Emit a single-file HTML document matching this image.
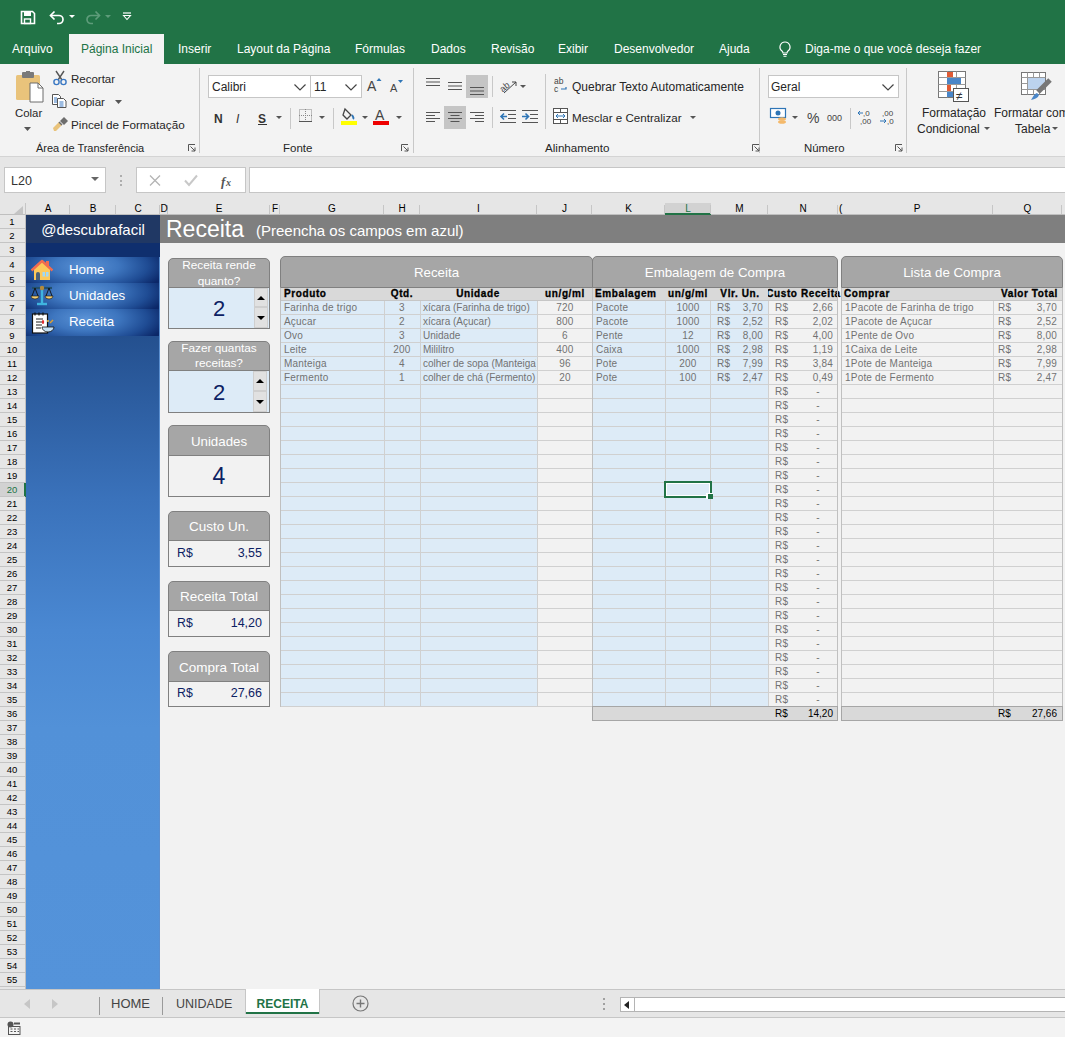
<!DOCTYPE html>
<html><head><meta charset="utf-8">
<style>
*{margin:0;padding:0;box-sizing:border-box}
html,body{width:1065px;height:1037px;overflow:hidden;background:#f3f3f3;font-family:"Liberation Sans",sans-serif;position:relative}
.a{position:absolute}
.t{position:absolute;white-space:nowrap}
svg{overflow:visible}
</style></head><body>
<div class="a" style="left:0px;top:0px;width:1065px;height:64px;background:#217346"></div>
<div class="a" style="left:69px;top:34px;width:95px;height:30px;background:#f3f3f3"></div>
<div class="t" style="left:12px;top:43px;font-size:12px;line-height:13.8px;color:#fff;font-weight:normal;">Arquivo</div>
<div class="t" style="left:81px;top:43px;font-size:12px;line-height:13.8px;color:#217346;font-weight:normal;">Página Inicial</div>
<div class="t" style="left:178px;top:43px;font-size:12px;line-height:13.8px;color:#fff;font-weight:normal;">Inserir</div>
<div class="t" style="left:237px;top:43px;font-size:12px;line-height:13.8px;color:#fff;font-weight:normal;">Layout da Página</div>
<div class="t" style="left:355px;top:43px;font-size:12px;line-height:13.8px;color:#fff;font-weight:normal;">Fórmulas</div>
<div class="t" style="left:431px;top:43px;font-size:12px;line-height:13.8px;color:#fff;font-weight:normal;">Dados</div>
<div class="t" style="left:491px;top:43px;font-size:12px;line-height:13.8px;color:#fff;font-weight:normal;">Revisão</div>
<div class="t" style="left:558px;top:43px;font-size:12px;line-height:13.8px;color:#fff;font-weight:normal;">Exibir</div>
<div class="t" style="left:614px;top:43px;font-size:12px;line-height:13.8px;color:#fff;font-weight:normal;">Desenvolvedor</div>
<div class="t" style="left:719px;top:43px;font-size:12px;line-height:13.8px;color:#fff;font-weight:normal;">Ajuda</div>
<div class="t" style="left:805px;top:43px;font-size:12px;line-height:13.8px;color:#fff;font-weight:normal;">Diga-me o que você deseja fazer</div>
<svg class="a" style="left:20px;top:10px;" width="16" height="15" viewBox="0 0 16 15"><path d="M1.5 1.5h11l2 2v10h-13z" fill="none" stroke="#fff" stroke-width="1.6"/><rect x="4" y="2" width="7" height="4" fill="#fff"/><rect x="4.5" y="9" width="6" height="4.5" fill="none" stroke="#fff" stroke-width="1.4"/></svg>
<svg class="a" style="left:49px;top:9px;" width="16" height="15" viewBox="0 0 16 15"><path d="M2 6.5h8a4 4 0 0 1 0 8h-2" fill="none" stroke="#fff" stroke-width="1.7"/><path d="M5.5 2.5l-4 4 4 4" fill="none" stroke="#fff" stroke-width="1.7"/></svg>
<svg class="a" style="left:69px;top:15px;" width="6" height="3" viewBox="0 0 6 3"><path d="M0 0h6l-3 3z" fill="#fff"/></svg>
<svg class="a" style="left:85px;top:9px;" width="16" height="15" viewBox="0 0 16 15"><path d="M14 6.5h-8a4 4 0 0 0 0 8h2" fill="none" stroke="#5e9c7a" stroke-width="1.7"/><path d="M10.5 2.5l4 4-4 4" fill="none" stroke="#5e9c7a" stroke-width="1.7"/></svg>
<svg class="a" style="left:105px;top:15px;" width="6" height="3" viewBox="0 0 6 3"><path d="M0 0h6l-3 3z" fill="#5e9c7a"/></svg>
<svg class="a" style="left:122px;top:12px;" width="10" height="8" viewBox="0 0 10 8"><path d="M1 1h8" stroke="#fff" stroke-width="1.2"/><path d="M1.5 3.5l3.5 4 3.5-4z" fill="none" stroke="#fff" stroke-width="1.1"/></svg>
<svg class="a" style="left:779px;top:41px;" width="12" height="16" viewBox="0 0 12 16"><path d="M6 1a5 5 0 0 0-3 9c.7.6 1 1.3 1 2h4c0-.7.3-1.4 1-2a5 5 0 0 0-3-9z" fill="none" stroke="#fff" stroke-width="1.2"/><path d="M4 13.5h4M4.5 15.3h3" stroke="#fff" stroke-width="1.1"/></svg>
<div class="a" style="left:0px;top:64px;width:1065px;height:92px;background:#f3f3f3"></div>
<div class="a" style="left:0px;top:156px;width:1065px;height:1px;background:#d4d4d4"></div>
<div class="a" style="left:199px;top:68px;width:1px;height:85px;background:#c8c8c8"></div>
<div class="a" style="left:413px;top:68px;width:1px;height:85px;background:#c8c8c8"></div>
<div class="a" style="left:759px;top:68px;width:1px;height:85px;background:#c8c8c8"></div>
<div class="a" style="left:906px;top:68px;width:1px;height:85px;background:#c8c8c8"></div>
<svg class="a" style="left:188px;top:144px;" width="8" height="8" viewBox="0 0 8 8"><path d="M0.5 7V0.5H7" fill="none" stroke="#555" stroke-width="1"/><path d="M2.5 2.5L7 7M7 3.5V7H3.5" fill="none" stroke="#555" stroke-width="1"/></svg>
<svg class="a" style="left:401px;top:144px;" width="8" height="8" viewBox="0 0 8 8"><path d="M0.5 7V0.5H7" fill="none" stroke="#555" stroke-width="1"/><path d="M2.5 2.5L7 7M7 3.5V7H3.5" fill="none" stroke="#555" stroke-width="1"/></svg>
<svg class="a" style="left:752px;top:144px;" width="8" height="8" viewBox="0 0 8 8"><path d="M0.5 7V0.5H7" fill="none" stroke="#555" stroke-width="1"/><path d="M2.5 2.5L7 7M7 3.5V7H3.5" fill="none" stroke="#555" stroke-width="1"/></svg>
<svg class="a" style="left:895px;top:144px;" width="8" height="8" viewBox="0 0 8 8"><path d="M0.5 7V0.5H7" fill="none" stroke="#555" stroke-width="1"/><path d="M2.5 2.5L7 7M7 3.5V7H3.5" fill="none" stroke="#555" stroke-width="1"/></svg>
<div class="t" style="left:36px;top:142px;font-size:11px;line-height:12.65px;color:#262626;font-weight:normal;">Área de Transferência</div>
<div class="t" style="left:283px;top:142px;font-size:11.5px;line-height:13.225px;color:#262626;font-weight:normal;">Fonte</div>
<div class="t" style="left:545px;top:141px;font-size:11.6px;line-height:13.34px;color:#262626;font-weight:normal;">Alinhamento</div>
<div class="t" style="left:804px;top:142px;font-size:11.4px;line-height:13.11px;color:#262626;font-weight:normal;">Número</div>
<svg class="a" style="left:14px;top:71px;" width="32" height="32" viewBox="0 0 32 32"><rect x="2" y="4" width="24" height="25" rx="1.5" fill="#e9c37b"/>
<rect x="8" y="1" width="12" height="6" rx="1" fill="#7a7a7a"/><rect x="12" y="0" width="4" height="3" fill="#7a7a7a"/>
<path d="M16 12h8l5 5v14H16z" fill="#fff" stroke="#6d6d6d" stroke-width="1"/><path d="M24 12v5h5" fill="none" stroke="#6d6d6d" stroke-width="1"/></svg>
<div class="t" style="left:15px;top:107px;font-size:11.4px;line-height:13.11px;color:#262626;font-weight:normal;">Colar</div>
<svg class="a" style="left:24px;top:127px;" width="7" height="4" viewBox="0 0 7 4"><path d="M0 0h7l-3.5 4z" fill="#555"/></svg>
<svg class="a" style="left:52px;top:70px;" width="16" height="15" viewBox="0 0 16 15"><path d="M4 1l6 9M12 1L6 10" stroke="#555" stroke-width="1.4" fill="none"/>
<circle cx="4.5" cy="12" r="2.6" fill="none" stroke="#3a78c3" stroke-width="1.4"/><circle cx="11.5" cy="12" r="2.6" fill="none" stroke="#3a78c3" stroke-width="1.4"/></svg>
<div class="t" style="left:71px;top:73px;font-size:11.5px;line-height:13.225px;color:#262626;font-weight:normal;">Recortar</div>
<svg class="a" style="left:52px;top:94px;" width="15" height="14" viewBox="0 0 15 14"><path d="M0.5 0.5h6l2 2v8h-8z" fill="#fff" stroke="#555"/><path d="M5.5 4.5h6l2.5 2.5v6.5h-8.5z" fill="#fff" stroke="#555"/>
<path d="M2 4h3M2 6h3M2 8h3M7.5 8h4M7.5 10h4M7.5 12h4" stroke="#3a78c3" stroke-width="1"/></svg>
<div class="t" style="left:71px;top:96px;font-size:11.5px;line-height:13.225px;color:#262626;font-weight:normal;">Copiar</div>
<svg class="a" style="left:115px;top:100px;" width="7" height="4" viewBox="0 0 7 4"><path d="M0 0h7l-3.5 4z" fill="#555"/></svg>
<svg class="a" style="left:52px;top:117px;" width="16" height="14" viewBox="0 0 16 14"><path d="M1 11l6-6 3 3-6 6H2z" fill="#e9c37b"/><path d="M8 4l4-4 4 4-4 4z" fill="#6d6d6d"/><path d="M7 5l3 3" stroke="#6d6d6d" stroke-width="1.5"/></svg>
<div class="t" style="left:71px;top:118px;font-size:11.7px;line-height:13.455px;color:#262626;font-weight:normal;">Pincel de Formatação</div>
<div class="a" style="left:208px;top:75px;width:103px;height:23px;background:#fff;border:1px solid #c6c6c6"></div>
<div class="a" style="left:310px;top:75px;width:52px;height:23px;background:#fff;border:1px solid #c6c6c6"></div>
<div class="t" style="left:212px;top:81px;font-size:12px;line-height:13.8px;color:#262626;font-weight:normal;">Calibri</div>
<div class="t" style="left:314px;top:81px;font-size:12px;line-height:13.8px;color:#262626;font-weight:normal;">11</div>
<svg class="a" style="left:294px;top:84px;" width="12" height="7" viewBox="0 0 12 7"><path d="M0.5 0.5l5.5 5.5 5.5-5.5" fill="none" stroke="#444" stroke-width="1.2"/></svg>
<svg class="a" style="left:345px;top:84px;" width="12" height="7" viewBox="0 0 12 7"><path d="M0.5 0.5l5.5 5.5 5.5-5.5" fill="none" stroke="#444" stroke-width="1.2"/></svg>
<svg class="a" style="left:367px;top:78px;" width="14" height="14" viewBox="0 0 14 14"><text x="0" y="13" font-family="Liberation Sans" font-size="14" fill="#444">A</text><path d="M9.5 3l2.5-3 2.5 3z" fill="#2e75b6"/></svg>
<svg class="a" style="left:390px;top:80px;" width="13" height="12" viewBox="0 0 13 12"><text x="0" y="11.5" font-family="Liberation Sans" font-size="11" fill="#444">A</text><path d="M8 0h5l-2.5 3z" fill="#2e75b6"/></svg>
<div class="t" style="left:214px;top:113px;font-size:12px;line-height:13.8px;color:#333;font-weight:bold;">N</div>
<div class="t" style="left:236px;top:113px;font-size:12px;line-height:13.8px;color:#333;font-weight:normal;font-style:italic;">I</div>
<div class="t" style="left:258px;top:113px;font-size:12px;line-height:13.8px;color:#333;font-weight:bold;">S</div>
<div class="a" style="left:258px;top:124px;width:9px;height:1px;background:#333"></div>
<svg class="a" style="left:276px;top:116px;" width="6" height="3" viewBox="0 0 6 3"><path d="M0 0h6l-3 3z" fill="#555"/></svg>
<div class="a" style="left:290px;top:108px;width:1px;height:21px;background:#c8c8c8"></div>
<svg class="a" style="left:299px;top:109px;" width="13" height="13" viewBox="0 0 13 13"><rect x="0.5" y="0.5" width="12" height="12" fill="none" stroke="#888" stroke-width="1" stroke-dasharray="1 1"/><path d="M6.5 0v13M0 6.5h13" stroke="#888" stroke-dasharray="1 1"/><path d="M0 12.5h13" stroke="#555"/></svg>
<svg class="a" style="left:319px;top:116px;" width="6" height="3" viewBox="0 0 6 3"><path d="M0 0h6l-3 3z" fill="#555"/></svg>
<div class="a" style="left:333px;top:108px;width:1px;height:21px;background:#c8c8c8"></div>
<svg class="a" style="left:341px;top:107px;" width="17" height="19" viewBox="0 0 17 19"><path d="M4 2l6 6-4 4-4-4z" fill="none" stroke="#444" stroke-width="1.3"/><path d="M11 8c1.5 2 2 3 1 4" stroke="#2e75b6" stroke-width="2" fill="none"/><rect x="0" y="14" width="16" height="4" fill="#ffff00"/></svg>
<svg class="a" style="left:362px;top:116px;" width="6" height="3" viewBox="0 0 6 3"><path d="M0 0h6l-3 3z" fill="#555"/></svg>
<svg class="a" style="left:373px;top:108px;" width="18" height="18" viewBox="0 0 18 18"><text x="2" y="12" font-family="Liberation Sans" font-size="14" fill="#444">A</text><rect x="0" y="13" width="16" height="4" fill="#e00"/></svg>
<svg class="a" style="left:396px;top:116px;" width="6" height="3" viewBox="0 0 6 3"><path d="M0 0h6l-3 3z" fill="#555"/></svg>
<svg class="a" style="left:426px;top:78px;" width="16" height="16" viewBox="0 0 16 16"><rect x="0" y="0.0" width="14" height="1" fill="#555"/><rect x="0" y="3.5" width="14" height="1" fill="#555"/><rect x="0" y="7.0" width="14" height="1" fill="#555"/></svg>
<svg class="a" style="left:448px;top:82px;" width="16" height="16" viewBox="0 0 16 16"><rect x="0" y="0.0" width="14" height="1" fill="#555"/><rect x="0" y="3.5" width="14" height="1" fill="#555"/><rect x="0" y="7.0" width="14" height="1" fill="#555"/></svg>
<div class="a" style="left:466px;top:75px;width:22px;height:23px;background:#c5c5c5"></div>
<svg class="a" style="left:470px;top:87px;" width="16" height="16" viewBox="0 0 16 16"><rect x="0" y="0.0" width="14" height="1" fill="#555"/><rect x="0" y="3.5" width="14" height="1" fill="#555"/><rect x="0" y="7.0" width="14" height="1" fill="#555"/></svg>
<div class="a" style="left:492px;top:76px;width:1px;height:21px;background:#c8c8c8"></div>
<svg class="a" style="left:500px;top:77px;" width="22" height="17" viewBox="0 0 22 17"><text x="0" y="12" font-family="Liberation Sans" font-size="9" fill="#444" transform="rotate(-40 6 10)">ab</text><path d="M4 16l12-11M12 5h4v4" fill="none" stroke="#444" stroke-width="1"/></svg>
<svg class="a" style="left:520px;top:85px;" width="6" height="3" viewBox="0 0 6 3"><path d="M0 0h6l-3 3z" fill="#555"/></svg>
<svg class="a" style="left:426px;top:112px;" width="16" height="16" viewBox="0 0 16 16"><rect x="0" y="0" width="14" height="1" fill="#555"/><rect x="0" y="3" width="9" height="1" fill="#555"/><rect x="0" y="6" width="14" height="1" fill="#555"/><rect x="0" y="9" width="9" height="1" fill="#555"/></svg>
<div class="a" style="left:444px;top:106px;width:22px;height:23px;background:#c5c5c5"></div>
<svg class="a" style="left:448px;top:112px;" width="16" height="16" viewBox="0 0 16 16"><rect x="0" y="0" width="14" height="1" fill="#555"/><rect x="2.5" y="3" width="9" height="1" fill="#555"/><rect x="0" y="6" width="14" height="1" fill="#555"/><rect x="2.5" y="9" width="9" height="1" fill="#555"/></svg>
<svg class="a" style="left:470px;top:112px;" width="16" height="16" viewBox="0 0 16 16"><rect x="0" y="0" width="14" height="1" fill="#555"/><rect x="5" y="3" width="9" height="1" fill="#555"/><rect x="0" y="6" width="14" height="1" fill="#555"/><rect x="5" y="9" width="9" height="1" fill="#555"/></svg>
<div class="a" style="left:492px;top:107px;width:1px;height:21px;background:#c8c8c8"></div>
<svg class="a" style="left:500px;top:110px;" width="16" height="14" viewBox="0 0 16 14"><rect x="0" y="0" width="16" height="1" fill="#555"/><rect x="8" y="4" width="8" height="1" fill="#555"/><rect x="8" y="8" width="8" height="1" fill="#555"/><rect x="0" y="12" width="16" height="1" fill="#555"/><path d="M1 6.5h6M4 3.5l-3 3 3 3" stroke="#2e75b6" stroke-width="1.6" fill="none"/></svg>
<svg class="a" style="left:522px;top:110px;" width="16" height="14" viewBox="0 0 16 14"><rect x="0" y="0" width="16" height="1" fill="#555"/><rect x="8" y="4" width="8" height="1" fill="#555"/><rect x="8" y="8" width="8" height="1" fill="#555"/><rect x="0" y="12" width="16" height="1" fill="#555"/><path d="M0 6.5h6M3.5 3.5l3 3-3 3" stroke="#2e75b6" stroke-width="1.6" fill="none"/></svg>
<div class="a" style="left:545px;top:74px;width:1px;height:55px;background:#c8c8c8"></div>
<svg class="a" style="left:553px;top:77px;" width="16" height="16" viewBox="0 0 16 16"><text x="1" y="7" font-family="Liberation Sans" font-size="8.5" fill="#444">ab</text><text x="1" y="15" font-family="Liberation Sans" font-size="8.5" fill="#444">c</text><path d="M8 12h5v-2" fill="none" stroke="#2e75b6" stroke-width="1.2"/></svg>
<div class="t" style="left:572px;top:81px;font-size:12px;line-height:13.8px;color:#262626;font-weight:normal;">Quebrar Texto Automaticamente</div>
<svg class="a" style="left:553px;top:108px;" width="15" height="16" viewBox="0 0 15 16"><rect x="0.5" y="0.5" width="14" height="15" fill="#fff" stroke="#555"/><path d="M0.5 4.5h14M0.5 11.5h14M7.5 0.5v4M7.5 11.5v4" stroke="#555"/><path d="M3 8h9M5 6l-2 2 2 2M10 6l2 2-2 2" stroke="#2e75b6" fill="none"/></svg>
<div class="t" style="left:572px;top:111px;font-size:11.6px;line-height:13.34px;color:#262626;font-weight:normal;">Mesclar e Centralizar</div>
<svg class="a" style="left:690px;top:116px;" width="6" height="3" viewBox="0 0 6 3"><path d="M0 0h6l-3 3z" fill="#555"/></svg>
<div class="a" style="left:768px;top:75px;width:131px;height:23px;background:#fff;border:1px solid #c6c6c6"></div>
<div class="t" style="left:771px;top:81px;font-size:12px;line-height:13.8px;color:#262626;font-weight:normal;">Geral</div>
<svg class="a" style="left:882px;top:84px;" width="12" height="7" viewBox="0 0 12 7"><path d="M0.5 0.5l5.5 5.5 5.5-5.5" fill="none" stroke="#444" stroke-width="1.2"/></svg>
<svg class="a" style="left:770px;top:108px;" width="18" height="17" viewBox="0 0 18 17"><rect x="0.5" y="0.5" width="15" height="9" fill="#fff" stroke="#2e75b6" stroke-width="1.2"/><circle cx="8" cy="5" r="2.5" fill="#2e75b6"/><ellipse cx="12" cy="11" rx="4" ry="1.8" fill="#f4b96b"/><ellipse cx="12" cy="14" rx="4" ry="1.8" fill="#f4b96b"/></svg>
<svg class="a" style="left:792px;top:116px;" width="6" height="3" viewBox="0 0 6 3"><path d="M0 0h6l-3 3z" fill="#555"/></svg>
<div class="t" style="left:807px;top:110px;font-size:14px;line-height:16.1px;color:#444;font-weight:normal;">%</div>
<div class="t" style="left:827px;top:113px;font-size:9px;line-height:10.35px;color:#444;font-weight:normal;">000</div>
<div class="a" style="left:850px;top:108px;width:1px;height:21px;background:#c8c8c8"></div>
<svg class="a" style="left:857px;top:109px;" width="17" height="16" viewBox="0 0 17 16"><text x="6" y="7" font-family="Liberation Sans" font-size="8" fill="#444">,0</text><text x="3" y="15" font-family="Liberation Sans" font-size="8" fill="#444">,00</text><path d="M1 4h5M3 2l-2 2 2 2" stroke="#2e75b6" fill="none"/></svg>
<svg class="a" style="left:879px;top:109px;" width="17" height="16" viewBox="0 0 17 16"><text x="3" y="7" font-family="Liberation Sans" font-size="8" fill="#444">,00</text><text x="8" y="15" font-family="Liberation Sans" font-size="8" fill="#444">,0</text><path d="M1 12h6M5 10l2 2-2 2" stroke="#2e75b6" fill="none"/></svg>
<svg class="a" style="left:938px;top:71px;" width="32" height="32" viewBox="0 0 32 32"><rect x="0.5" y="0.5" width="27" height="26" fill="#fff" stroke="#777"/>
<path d="M0.5 6.5h27M0.5 13.5h27M0.5 20.5h27M9.5 0.5v26M18.5 0.5v26" stroke="#999"/>
<rect x="9" y="1" width="6" height="5" fill="#e05b35"/><rect x="9" y="7" width="14" height="6" fill="#4a86c8"/><rect x="9" y="14" width="4" height="6" fill="#e05b35"/><rect x="9" y="21" width="9" height="5" fill="#4a86c8"/>
<rect x="15.5" y="17.5" width="15" height="13" fill="#fff" stroke="#555"/><text x="18" y="29" font-family="Liberation Sans" font-size="12" fill="#333">≠</text></svg>
<div class="t" style="left:922px;top:107px;font-size:12px;line-height:13.8px;color:#262626;font-weight:normal;">Formatação</div>
<div class="t" style="left:917px;top:123px;font-size:12px;line-height:13.8px;color:#262626;font-weight:normal;">Condicional</div>
<svg class="a" style="left:984px;top:127px;" width="6" height="3" viewBox="0 0 6 3"><path d="M0 0h6l-3 3z" fill="#555"/></svg>
<svg class="a" style="left:1021px;top:72px;" width="32" height="32" viewBox="0 0 32 32"><rect x="0.5" y="0.5" width="24" height="22" fill="#fff" stroke="#777"/>
<path d="M0.5 5.5h24M0.5 11.5h24M0.5 17.5h24M6.5 0.5v22M12.5 0.5v22M18.5 0.5v22" stroke="#999"/>
<rect x="7" y="6" width="17" height="11" fill="#bcd3ee"/>
<path d="M29 8l-12 12" stroke="#777" stroke-width="5"/><path d="M16 21c-3 1-4 4-6 7 4-1 7-2 8-5z" fill="#4a86c8"/></svg>
<div class="t" style="left:994px;top:107px;font-size:12px;line-height:13.8px;color:#262626;font-weight:normal;">Formatar como</div>
<div class="t" style="left:1015px;top:123px;font-size:12px;line-height:13.8px;color:#262626;font-weight:normal;">Tabela</div>
<svg class="a" style="left:1052px;top:127px;" width="6" height="3" viewBox="0 0 6 3"><path d="M0 0h6l-3 3z" fill="#555"/></svg>
<div class="a" style="left:0px;top:157px;width:1065px;height:46px;background:#e6e6e6"></div>
<div class="a" style="left:4px;top:167px;width:102px;height:26px;background:#fff;border:1px solid #c6c6c6"></div>
<div class="t" style="left:11px;top:174px;font-size:12.5px;line-height:14.375px;color:#333;font-weight:normal;">L20</div>
<svg class="a" style="left:91px;top:177px;" width="8" height="4" viewBox="0 0 8 4"><path d="M0 0h8l-4 4z" fill="#666"/></svg>
<div class="a" style="left:120px;top:175px;width:2px;height:2px;background:#9a9a9a;border-radius:1px"></div>
<div class="a" style="left:120px;top:179.5px;width:2px;height:2px;background:#9a9a9a;border-radius:1px"></div>
<div class="a" style="left:120px;top:184px;width:2px;height:2px;background:#9a9a9a;border-radius:1px"></div>
<div class="a" style="left:136px;top:167px;width:110px;height:26px;background:#fff;border:1px solid #c6c6c6"></div>
<svg class="a" style="left:149px;top:175px;" width="12" height="11" viewBox="0 0 12 11"><path d="M1 0.5l10 10M11 0.5l-10 10" stroke="#b4b4b4" stroke-width="1.3"/></svg>
<svg class="a" style="left:184px;top:175px;" width="14" height="11" viewBox="0 0 14 11"><path d="M1 5.5l4 4.5 8-9.5" fill="none" stroke="#c8c8c8" stroke-width="2"/></svg>
<div class="t" style="left:221px;top:175px;font-size:13px;line-height:14.95px;color:#555;font-weight:normal;font-family:'Liberation Serif',serif;font-style:italic;font-weight:bold;">f</div>
<div class="t" style="left:226px;top:177px;font-size:10px;line-height:11.5px;color:#555;font-weight:normal;font-family:'Liberation Serif',serif;font-style:italic;font-weight:bold;">x</div>
<div class="a" style="left:249px;top:167px;width:830px;height:26px;background:#fff;border:1px solid #c6c6c6"></div>
<div class="a" style="left:0px;top:203px;width:1065px;height:12px;background:#e6e6e6"></div>
<div class="a" style="left:0px;top:214px;width:1065px;height:1px;background:#bfbfbf"></div>
<svg class="a" style="left:14px;top:206px;" width="9" height="8" viewBox="0 0 9 8"><path d="M9 0v8H0z" fill="#c4c4c4"/></svg>
<div class="a" style="left:69px;top:205px;width:1px;height:9px;background:#c6c6c6"></div>
<div class="t" style="left:48.0px;top:203px;font-size:10px;line-height:11.5px;color:#000;font-weight:normal;transform:translateX(-50%);">A</div>
<div class="a" style="left:115px;top:205px;width:1px;height:9px;background:#c6c6c6"></div>
<div class="t" style="left:93.0px;top:203px;font-size:10px;line-height:11.5px;color:#000;font-weight:normal;transform:translateX(-50%);">B</div>
<div class="a" style="left:159px;top:205px;width:1px;height:9px;background:#c6c6c6"></div>
<div class="t" style="left:138.0px;top:203px;font-size:10px;line-height:11.5px;color:#000;font-weight:normal;transform:translateX(-50%);">C</div>
<div class="a" style="left:167px;top:205px;width:1px;height:9px;background:#c6c6c6"></div>
<div class="t" style="left:164.0px;top:203px;font-size:10px;line-height:11.5px;color:#000;font-weight:normal;transform:translateX(-50%);">D</div>
<div class="a" style="left:269px;top:205px;width:1px;height:9px;background:#c6c6c6"></div>
<div class="t" style="left:219.0px;top:203px;font-size:10px;line-height:11.5px;color:#000;font-weight:normal;transform:translateX(-50%);">E</div>
<div class="a" style="left:279px;top:205px;width:1px;height:9px;background:#c6c6c6"></div>
<div class="t" style="left:275.0px;top:203px;font-size:10px;line-height:11.5px;color:#000;font-weight:normal;transform:translateX(-50%);">F</div>
<div class="a" style="left:383px;top:205px;width:1px;height:9px;background:#c6c6c6"></div>
<div class="t" style="left:332.0px;top:203px;font-size:10px;line-height:11.5px;color:#000;font-weight:normal;transform:translateX(-50%);">G</div>
<div class="a" style="left:419px;top:205px;width:1px;height:9px;background:#c6c6c6"></div>
<div class="t" style="left:402.0px;top:203px;font-size:10px;line-height:11.5px;color:#000;font-weight:normal;transform:translateX(-50%);">H</div>
<div class="a" style="left:536px;top:205px;width:1px;height:9px;background:#c6c6c6"></div>
<div class="t" style="left:478.5px;top:203px;font-size:10px;line-height:11.5px;color:#000;font-weight:normal;transform:translateX(-50%);">I</div>
<div class="a" style="left:591px;top:205px;width:1px;height:9px;background:#c6c6c6"></div>
<div class="t" style="left:564.5px;top:203px;font-size:10px;line-height:11.5px;color:#000;font-weight:normal;transform:translateX(-50%);">J</div>
<div class="a" style="left:664px;top:205px;width:1px;height:9px;background:#c6c6c6"></div>
<div class="t" style="left:628.5px;top:203px;font-size:10px;line-height:11.5px;color:#000;font-weight:normal;transform:translateX(-50%);">K</div>
<div class="a" style="left:665px;top:203px;width:46px;height:11px;background:#d2d2d2"></div>
<div class="a" style="left:665px;top:213px;width:46px;height:2px;background:#217346"></div>
<div class="a" style="left:710px;top:205px;width:1px;height:9px;background:#c6c6c6"></div>
<div class="t" style="left:688.0px;top:203px;font-size:10px;line-height:11.5px;color:#217346;font-weight:normal;transform:translateX(-50%);">L</div>
<div class="a" style="left:767px;top:205px;width:1px;height:9px;background:#c6c6c6"></div>
<div class="t" style="left:739.5px;top:203px;font-size:10px;line-height:11.5px;color:#000;font-weight:normal;transform:translateX(-50%);">M</div>
<div class="a" style="left:837px;top:205px;width:1px;height:9px;background:#c6c6c6"></div>
<div class="t" style="left:803.0px;top:203px;font-size:10px;line-height:11.5px;color:#000;font-weight:normal;transform:translateX(-50%);">N</div>
<div class="a" style="left:840px;top:205px;width:1px;height:9px;background:#c6c6c6"></div>
<div class="t" style="left:839px;top:203px;font-size:10px;line-height:11.5px;color:#000;font-weight:normal;">(</div>
<div class="a" style="left:992px;top:205px;width:1px;height:9px;background:#c6c6c6"></div>
<div class="t" style="left:917.0px;top:203px;font-size:10px;line-height:11.5px;color:#000;font-weight:normal;transform:translateX(-50%);">P</div>
<div class="a" style="left:1061px;top:205px;width:1px;height:9px;background:#c6c6c6"></div>
<div class="t" style="left:1027.5px;top:203px;font-size:10px;line-height:11.5px;color:#000;font-weight:normal;transform:translateX(-50%);">Q</div>
<div class="a" style="left:1129px;top:205px;width:1px;height:9px;background:#c6c6c6"></div>
<div class="t" style="left:1096.0px;top:203px;font-size:10px;line-height:11.5px;color:#000;font-weight:normal;transform:translateX(-50%);">R</div>
<div class="a" style="left:25px;top:203px;width:1px;height:12px;background:#c6c6c6"></div>
<div class="a" style="left:0px;top:215px;width:26px;height:775px;background:#e6e6e6"></div>
<div class="a" style="left:25px;top:215px;width:1px;height:775px;background:#bfbfbf"></div>
<div class="a" style="left:0px;top:228px;width:25px;height:1px;background:#c4c4c4"></div>
<div class="t" style="left:12px;top:217px;font-size:9.5px;line-height:10.925px;color:#000;font-weight:normal;transform:translateX(-50%);">1</div>
<div class="a" style="left:0px;top:242px;width:25px;height:1px;background:#c4c4c4"></div>
<div class="t" style="left:12px;top:231px;font-size:9.5px;line-height:10.925px;color:#000;font-weight:normal;transform:translateX(-50%);">2</div>
<div class="a" style="left:0px;top:256px;width:25px;height:1px;background:#c4c4c4"></div>
<div class="t" style="left:12px;top:245px;font-size:9.5px;line-height:10.925px;color:#000;font-weight:normal;transform:translateX(-50%);">3</div>
<div class="a" style="left:0px;top:271px;width:25px;height:1px;background:#c4c4c4"></div>
<div class="t" style="left:12px;top:260px;font-size:9.5px;line-height:10.925px;color:#000;font-weight:normal;transform:translateX(-50%);">4</div>
<div class="a" style="left:0px;top:286px;width:25px;height:1px;background:#c4c4c4"></div>
<div class="t" style="left:12px;top:275px;font-size:9.5px;line-height:10.925px;color:#000;font-weight:normal;transform:translateX(-50%);">5</div>
<div class="a" style="left:0px;top:300px;width:25px;height:1px;background:#c4c4c4"></div>
<div class="t" style="left:12px;top:289px;font-size:9.5px;line-height:10.925px;color:#000;font-weight:normal;transform:translateX(-50%);">6</div>
<div class="a" style="left:0px;top:314px;width:25px;height:1px;background:#c4c4c4"></div>
<div class="t" style="left:12px;top:303px;font-size:9.5px;line-height:10.925px;color:#000;font-weight:normal;transform:translateX(-50%);">7</div>
<div class="a" style="left:0px;top:328px;width:25px;height:1px;background:#c4c4c4"></div>
<div class="t" style="left:12px;top:317px;font-size:9.5px;line-height:10.925px;color:#000;font-weight:normal;transform:translateX(-50%);">8</div>
<div class="a" style="left:0px;top:342px;width:25px;height:1px;background:#c4c4c4"></div>
<div class="t" style="left:12px;top:331px;font-size:9.5px;line-height:10.925px;color:#000;font-weight:normal;transform:translateX(-50%);">9</div>
<div class="a" style="left:0px;top:356px;width:25px;height:1px;background:#c4c4c4"></div>
<div class="t" style="left:12px;top:345px;font-size:9.5px;line-height:10.925px;color:#000;font-weight:normal;transform:translateX(-50%);">10</div>
<div class="a" style="left:0px;top:370px;width:25px;height:1px;background:#c4c4c4"></div>
<div class="t" style="left:12px;top:359px;font-size:9.5px;line-height:10.925px;color:#000;font-weight:normal;transform:translateX(-50%);">11</div>
<div class="a" style="left:0px;top:384px;width:25px;height:1px;background:#c4c4c4"></div>
<div class="t" style="left:12px;top:373px;font-size:9.5px;line-height:10.925px;color:#000;font-weight:normal;transform:translateX(-50%);">12</div>
<div class="a" style="left:0px;top:398px;width:25px;height:1px;background:#c4c4c4"></div>
<div class="t" style="left:12px;top:387px;font-size:9.5px;line-height:10.925px;color:#000;font-weight:normal;transform:translateX(-50%);">13</div>
<div class="a" style="left:0px;top:412px;width:25px;height:1px;background:#c4c4c4"></div>
<div class="t" style="left:12px;top:401px;font-size:9.5px;line-height:10.925px;color:#000;font-weight:normal;transform:translateX(-50%);">14</div>
<div class="a" style="left:0px;top:426px;width:25px;height:1px;background:#c4c4c4"></div>
<div class="t" style="left:12px;top:415px;font-size:9.5px;line-height:10.925px;color:#000;font-weight:normal;transform:translateX(-50%);">15</div>
<div class="a" style="left:0px;top:440px;width:25px;height:1px;background:#c4c4c4"></div>
<div class="t" style="left:12px;top:429px;font-size:9.5px;line-height:10.925px;color:#000;font-weight:normal;transform:translateX(-50%);">16</div>
<div class="a" style="left:0px;top:454px;width:25px;height:1px;background:#c4c4c4"></div>
<div class="t" style="left:12px;top:443px;font-size:9.5px;line-height:10.925px;color:#000;font-weight:normal;transform:translateX(-50%);">17</div>
<div class="a" style="left:0px;top:468px;width:25px;height:1px;background:#c4c4c4"></div>
<div class="t" style="left:12px;top:457px;font-size:9.5px;line-height:10.925px;color:#000;font-weight:normal;transform:translateX(-50%);">18</div>
<div class="a" style="left:0px;top:482px;width:25px;height:1px;background:#c4c4c4"></div>
<div class="t" style="left:12px;top:471px;font-size:9.5px;line-height:10.925px;color:#000;font-weight:normal;transform:translateX(-50%);">19</div>
<div class="a" style="left:0px;top:483px;width:25px;height:14px;background:#d2d2d2"></div>
<div class="a" style="left:24px;top:483px;width:2px;height:14px;background:#217346"></div>
<div class="a" style="left:0px;top:496px;width:25px;height:1px;background:#c4c4c4"></div>
<div class="t" style="left:12px;top:485px;font-size:9.5px;line-height:10.925px;color:#217346;font-weight:normal;transform:translateX(-50%);">20</div>
<div class="a" style="left:0px;top:510px;width:25px;height:1px;background:#c4c4c4"></div>
<div class="t" style="left:12px;top:499px;font-size:9.5px;line-height:10.925px;color:#000;font-weight:normal;transform:translateX(-50%);">21</div>
<div class="a" style="left:0px;top:524px;width:25px;height:1px;background:#c4c4c4"></div>
<div class="t" style="left:12px;top:513px;font-size:9.5px;line-height:10.925px;color:#000;font-weight:normal;transform:translateX(-50%);">22</div>
<div class="a" style="left:0px;top:538px;width:25px;height:1px;background:#c4c4c4"></div>
<div class="t" style="left:12px;top:527px;font-size:9.5px;line-height:10.925px;color:#000;font-weight:normal;transform:translateX(-50%);">23</div>
<div class="a" style="left:0px;top:552px;width:25px;height:1px;background:#c4c4c4"></div>
<div class="t" style="left:12px;top:541px;font-size:9.5px;line-height:10.925px;color:#000;font-weight:normal;transform:translateX(-50%);">24</div>
<div class="a" style="left:0px;top:566px;width:25px;height:1px;background:#c4c4c4"></div>
<div class="t" style="left:12px;top:555px;font-size:9.5px;line-height:10.925px;color:#000;font-weight:normal;transform:translateX(-50%);">25</div>
<div class="a" style="left:0px;top:580px;width:25px;height:1px;background:#c4c4c4"></div>
<div class="t" style="left:12px;top:569px;font-size:9.5px;line-height:10.925px;color:#000;font-weight:normal;transform:translateX(-50%);">26</div>
<div class="a" style="left:0px;top:594px;width:25px;height:1px;background:#c4c4c4"></div>
<div class="t" style="left:12px;top:583px;font-size:9.5px;line-height:10.925px;color:#000;font-weight:normal;transform:translateX(-50%);">27</div>
<div class="a" style="left:0px;top:608px;width:25px;height:1px;background:#c4c4c4"></div>
<div class="t" style="left:12px;top:597px;font-size:9.5px;line-height:10.925px;color:#000;font-weight:normal;transform:translateX(-50%);">28</div>
<div class="a" style="left:0px;top:622px;width:25px;height:1px;background:#c4c4c4"></div>
<div class="t" style="left:12px;top:611px;font-size:9.5px;line-height:10.925px;color:#000;font-weight:normal;transform:translateX(-50%);">29</div>
<div class="a" style="left:0px;top:636px;width:25px;height:1px;background:#c4c4c4"></div>
<div class="t" style="left:12px;top:625px;font-size:9.5px;line-height:10.925px;color:#000;font-weight:normal;transform:translateX(-50%);">30</div>
<div class="a" style="left:0px;top:650px;width:25px;height:1px;background:#c4c4c4"></div>
<div class="t" style="left:12px;top:639px;font-size:9.5px;line-height:10.925px;color:#000;font-weight:normal;transform:translateX(-50%);">31</div>
<div class="a" style="left:0px;top:664px;width:25px;height:1px;background:#c4c4c4"></div>
<div class="t" style="left:12px;top:653px;font-size:9.5px;line-height:10.925px;color:#000;font-weight:normal;transform:translateX(-50%);">32</div>
<div class="a" style="left:0px;top:678px;width:25px;height:1px;background:#c4c4c4"></div>
<div class="t" style="left:12px;top:667px;font-size:9.5px;line-height:10.925px;color:#000;font-weight:normal;transform:translateX(-50%);">33</div>
<div class="a" style="left:0px;top:692px;width:25px;height:1px;background:#c4c4c4"></div>
<div class="t" style="left:12px;top:681px;font-size:9.5px;line-height:10.925px;color:#000;font-weight:normal;transform:translateX(-50%);">34</div>
<div class="a" style="left:0px;top:706px;width:25px;height:1px;background:#c4c4c4"></div>
<div class="t" style="left:12px;top:695px;font-size:9.5px;line-height:10.925px;color:#000;font-weight:normal;transform:translateX(-50%);">35</div>
<div class="a" style="left:0px;top:720px;width:25px;height:1px;background:#c4c4c4"></div>
<div class="t" style="left:12px;top:709px;font-size:9.5px;line-height:10.925px;color:#000;font-weight:normal;transform:translateX(-50%);">36</div>
<div class="a" style="left:0px;top:734px;width:25px;height:1px;background:#c4c4c4"></div>
<div class="t" style="left:12px;top:723px;font-size:9.5px;line-height:10.925px;color:#000;font-weight:normal;transform:translateX(-50%);">37</div>
<div class="a" style="left:0px;top:748px;width:25px;height:1px;background:#c4c4c4"></div>
<div class="t" style="left:12px;top:737px;font-size:9.5px;line-height:10.925px;color:#000;font-weight:normal;transform:translateX(-50%);">38</div>
<div class="a" style="left:0px;top:762px;width:25px;height:1px;background:#c4c4c4"></div>
<div class="t" style="left:12px;top:751px;font-size:9.5px;line-height:10.925px;color:#000;font-weight:normal;transform:translateX(-50%);">39</div>
<div class="a" style="left:0px;top:776px;width:25px;height:1px;background:#c4c4c4"></div>
<div class="t" style="left:12px;top:765px;font-size:9.5px;line-height:10.925px;color:#000;font-weight:normal;transform:translateX(-50%);">40</div>
<div class="a" style="left:0px;top:790px;width:25px;height:1px;background:#c4c4c4"></div>
<div class="t" style="left:12px;top:779px;font-size:9.5px;line-height:10.925px;color:#000;font-weight:normal;transform:translateX(-50%);">41</div>
<div class="a" style="left:0px;top:804px;width:25px;height:1px;background:#c4c4c4"></div>
<div class="t" style="left:12px;top:793px;font-size:9.5px;line-height:10.925px;color:#000;font-weight:normal;transform:translateX(-50%);">42</div>
<div class="a" style="left:0px;top:818px;width:25px;height:1px;background:#c4c4c4"></div>
<div class="t" style="left:12px;top:807px;font-size:9.5px;line-height:10.925px;color:#000;font-weight:normal;transform:translateX(-50%);">43</div>
<div class="a" style="left:0px;top:832px;width:25px;height:1px;background:#c4c4c4"></div>
<div class="t" style="left:12px;top:821px;font-size:9.5px;line-height:10.925px;color:#000;font-weight:normal;transform:translateX(-50%);">44</div>
<div class="a" style="left:0px;top:846px;width:25px;height:1px;background:#c4c4c4"></div>
<div class="t" style="left:12px;top:835px;font-size:9.5px;line-height:10.925px;color:#000;font-weight:normal;transform:translateX(-50%);">45</div>
<div class="a" style="left:0px;top:860px;width:25px;height:1px;background:#c4c4c4"></div>
<div class="t" style="left:12px;top:849px;font-size:9.5px;line-height:10.925px;color:#000;font-weight:normal;transform:translateX(-50%);">46</div>
<div class="a" style="left:0px;top:874px;width:25px;height:1px;background:#c4c4c4"></div>
<div class="t" style="left:12px;top:863px;font-size:9.5px;line-height:10.925px;color:#000;font-weight:normal;transform:translateX(-50%);">47</div>
<div class="a" style="left:0px;top:888px;width:25px;height:1px;background:#c4c4c4"></div>
<div class="t" style="left:12px;top:877px;font-size:9.5px;line-height:10.925px;color:#000;font-weight:normal;transform:translateX(-50%);">48</div>
<div class="a" style="left:0px;top:902px;width:25px;height:1px;background:#c4c4c4"></div>
<div class="t" style="left:12px;top:891px;font-size:9.5px;line-height:10.925px;color:#000;font-weight:normal;transform:translateX(-50%);">49</div>
<div class="a" style="left:0px;top:916px;width:25px;height:1px;background:#c4c4c4"></div>
<div class="t" style="left:12px;top:905px;font-size:9.5px;line-height:10.925px;color:#000;font-weight:normal;transform:translateX(-50%);">50</div>
<div class="a" style="left:0px;top:930px;width:25px;height:1px;background:#c4c4c4"></div>
<div class="t" style="left:12px;top:919px;font-size:9.5px;line-height:10.925px;color:#000;font-weight:normal;transform:translateX(-50%);">51</div>
<div class="a" style="left:0px;top:944px;width:25px;height:1px;background:#c4c4c4"></div>
<div class="t" style="left:12px;top:933px;font-size:9.5px;line-height:10.925px;color:#000;font-weight:normal;transform:translateX(-50%);">52</div>
<div class="a" style="left:0px;top:958px;width:25px;height:1px;background:#c4c4c4"></div>
<div class="t" style="left:12px;top:947px;font-size:9.5px;line-height:10.925px;color:#000;font-weight:normal;transform:translateX(-50%);">53</div>
<div class="a" style="left:0px;top:972px;width:25px;height:1px;background:#c4c4c4"></div>
<div class="t" style="left:12px;top:961px;font-size:9.5px;line-height:10.925px;color:#000;font-weight:normal;transform:translateX(-50%);">54</div>
<div class="a" style="left:0px;top:986px;width:25px;height:1px;background:#c4c4c4"></div>
<div class="t" style="left:12px;top:975px;font-size:9.5px;line-height:10.925px;color:#000;font-weight:normal;transform:translateX(-50%);">55</div>
<div class="a" style="left:0px;top:1000px;width:25px;height:1px;background:#c4c4c4"></div>
<div class="a" style="left:26px;top:215px;width:1039px;height:775px;background:#f2f2f2"></div>
<div class="a" style="left:26px;top:215px;width:134px;height:28px;background:#203864"></div>
<div class="t" style="left:93px;top:221px;font-size:15px;line-height:17.25px;color:#fff;font-weight:normal;transform:translateX(-50%);">@descubrafacil</div>
<div class="a" style="left:26px;top:243px;width:134px;height:14px;background:#0f2f6e"></div>
<div class="a" style="left:26px;top:336px;width:134px;height:654px;background:linear-gradient(180deg,#24508f 0%,#3a72bb 25%,#4a88d2 45%,#5291d8 60%,#5493da 100%)"></div>
<div class="a" style="left:26px;top:257px;width:133px;height:26px;background:radial-gradient(ellipse 62% 115% at 45% 35%,#5a92d6 0%,#3e76bf 40%,#1f4c94 75%,#0b2768 100%)"></div>
<div class="t" style="left:69px;top:262px;font-size:13.3px;line-height:15.295px;color:#fff;font-weight:normal;">Home</div>
<div class="a" style="left:26px;top:283px;width:133px;height:26px;background:radial-gradient(ellipse 62% 115% at 45% 35%,#5a92d6 0%,#3e76bf 40%,#1f4c94 75%,#0b2768 100%)"></div>
<div class="t" style="left:69px;top:288px;font-size:13.3px;line-height:15.295px;color:#fff;font-weight:normal;">Unidades</div>
<div class="a" style="left:26px;top:309px;width:133px;height:27px;background:radial-gradient(ellipse 62% 115% at 45% 35%,#5a92d6 0%,#3e76bf 40%,#1f4c94 75%,#0b2768 100%)"></div>
<div class="t" style="left:69px;top:314px;font-size:13.3px;line-height:15.295px;color:#fff;font-weight:normal;">Receita</div>
<div class="a" style="left:159px;top:257px;width:1px;height:733px;background:#5b8fd0"></div>
<svg class="a" style="left:30px;top:259px;" width="24" height="22" viewBox="0 0 24 22"><path d="M12 1L1 11h3v10h16V11h3z" fill="#fcc95a"/><path d="M1.5 11.5L12 2l10.5 9.5" fill="none" stroke="#f06b50" stroke-width="2.4" stroke-linejoin="round"/>
<rect x="16" y="2" width="3" height="5" fill="#f06b50"/><path d="M6 21v-6a2 2 0 0 1 4 0v6z" fill="#4c6278"/><rect x="12.5" y="13" width="6" height="4.5" fill="#9fd8f5"/><path d="M15.5 13v4.5" stroke="#fcc95a"/></svg>
<svg class="a" style="left:30px;top:283px;" width="24" height="24" viewBox="0 0 24 24"><path d="M2 5h20" stroke="#22506d" stroke-width="2.2"/><path d="M12 3v18" stroke="#3fb4df" stroke-width="2.4"/><circle cx="12" cy="5" r="2.2" fill="#b58a3a"/>
<path d="M5 5L2 13M5 5l3 8M19 5l-3 8M19 5l3 8" stroke="#111" stroke-width="0.9"/><path d="M1 13h8a4 3 0 0 1-8 0zM15 13h8a4 3 0 0 1-8 0z" fill="#f5cf74" stroke="#111" stroke-width="0.6"/>
<path d="M7 21h10" stroke="#3fb4df" stroke-width="2.4"/></svg>
<svg class="a" style="left:31px;top:311px;" width="24" height="24" viewBox="0 0 24 24"><rect x="1.5" y="3" width="15" height="19" fill="#fff" stroke="#111" stroke-width="1.2"/>
<path d="M4 1.5v3M8 1.5v3M12 1.5v3" stroke="#111" stroke-width="1.2"/>
<path d="M5 8h7M5 11h7M5 14h6M5 17h5" stroke="#222" stroke-width="1.1"/><ellipse cx="12" cy="11" rx="1.2" ry="2" fill="#e03030"/>
<path d="M11 16h12a6 5 0 0 1-12 0z" fill="#c6e2f5" stroke="#111" stroke-width="0.8"/><path d="M19 12l3-3" stroke="#e0a030" stroke-width="1.5"/><circle cx="17" cy="10" r="1" fill="#f5c040"/></svg>
<div class="a" style="left:160px;top:215px;width:905px;height:28px;background:#7f7f7f"></div>
<div class="t" style="left:166px;top:216px;font-size:23px;line-height:26.45px;color:#fff;font-weight:normal;">Receita</div>
<div class="t" style="left:256px;top:222px;font-size:15px;line-height:17.25px;color:#fff;font-weight:normal;">(Preencha os campos em azul)</div>
<div class="a" style="left:168px;top:258px;width:102px;height:30px;background:#a6a6a6;border:1px solid #808080;border-radius:5px 5px 0 0"></div>
<div class="a" style="left:168px;top:287px;width:102px;height:42px;background:#ddebf7;border:1px solid #808080;border-top:1px solid #808080"></div>
<div class="t" style="left:219px;top:259px;font-size:11.8px;line-height:13.57px;color:#fff;font-weight:normal;transform:translateX(-50%);">Receita rende</div>
<div class="t" style="left:219px;top:275px;font-size:11.8px;line-height:13.57px;color:#fff;font-weight:normal;transform:translateX(-50%);">quanto?</div>
<div class="t" style="left:219px;top:296px;font-size:22px;line-height:25.3px;color:#0c2163;font-weight:normal;transform:translateX(-50%);">2</div>
<div class="a" style="left:254px;top:288px;width:14px;height:19px;background:#e1e1e1;border:1px solid #cfcfcf"></div>
<div class="a" style="left:254px;top:307px;width:14px;height:21px;background:#e1e1e1;border:1px solid #cfcfcf"></div>
<svg class="a" style="left:257px;top:296px;" width="8" height="4" viewBox="0 0 8 4"><path d="M0 4h8L4 0z" fill="#000"/></svg>
<svg class="a" style="left:257px;top:316px;" width="8" height="4" viewBox="0 0 8 4"><path d="M0 0h8L4 4z" fill="#000"/></svg>
<div class="a" style="left:168px;top:341px;width:102px;height:30px;background:#a6a6a6;border:1px solid #808080;border-radius:5px 5px 0 0"></div>
<div class="a" style="left:168px;top:370px;width:102px;height:43px;background:#ddebf7;border:1px solid #808080;border-top:1px solid #808080"></div>
<div class="t" style="left:219px;top:342px;font-size:11.8px;line-height:13.57px;color:#fff;font-weight:normal;transform:translateX(-50%);">Fazer quantas</div>
<div class="t" style="left:219px;top:357px;font-size:11.8px;line-height:13.57px;color:#fff;font-weight:normal;transform:translateX(-50%);">receitas?</div>
<div class="t" style="left:219px;top:380px;font-size:22px;line-height:25.3px;color:#0c2163;font-weight:normal;transform:translateX(-50%);">2</div>
<div class="a" style="left:253px;top:371px;width:14px;height:20px;background:#e1e1e1;border:1px solid #cfcfcf"></div>
<div class="a" style="left:253px;top:391px;width:14px;height:21px;background:#e1e1e1;border:1px solid #cfcfcf"></div>
<svg class="a" style="left:256px;top:379px;" width="8" height="4" viewBox="0 0 8 4"><path d="M0 4h8L4 0z" fill="#000"/></svg>
<svg class="a" style="left:256px;top:400px;" width="8" height="4" viewBox="0 0 8 4"><path d="M0 0h8L4 4z" fill="#000"/></svg>
<div class="a" style="left:168px;top:425px;width:102px;height:31px;background:#a6a6a6;border:1px solid #808080;border-radius:5px 5px 0 0"></div>
<div class="a" style="left:168px;top:455px;width:102px;height:42px;background:#f2f2f2;border:1px solid #808080;border-top:1px solid #808080"></div>
<div class="t" style="left:219px;top:434px;font-size:13.3px;line-height:15.295px;color:#fff;font-weight:normal;transform:translateX(-50%);">Unidades</div>
<div class="t" style="left:219px;top:463px;font-size:23px;line-height:26.45px;color:#0c2163;font-weight:normal;transform:translateX(-50%);">4</div>
<div class="a" style="left:168px;top:511px;width:102px;height:30px;background:#a6a6a6;border:1px solid #808080;border-radius:5px 5px 0 0"></div>
<div class="a" style="left:168px;top:540px;width:102px;height:27px;background:#f2f2f2;border:1px solid #808080;border-top:1px solid #808080"></div>
<div class="t" style="left:219px;top:519px;font-size:13.5px;line-height:15.525px;color:#fff;font-weight:normal;transform:translateX(-50%);">Custo Un.</div>
<div class="t" style="left:177px;top:546px;font-size:12.3px;line-height:14.145px;color:#0c2163;font-weight:normal;">R$</div>
<div class="t" style="left:262px;top:546px;font-size:12.5px;line-height:14.375px;color:#0c2163;font-weight:normal;transform:translateX(-100%);">3,55</div>
<div class="a" style="left:168px;top:581px;width:102px;height:30px;background:#a6a6a6;border:1px solid #808080;border-radius:5px 5px 0 0"></div>
<div class="a" style="left:168px;top:610px;width:102px;height:27px;background:#f2f2f2;border:1px solid #808080;border-top:1px solid #808080"></div>
<div class="t" style="left:219px;top:589px;font-size:13.5px;line-height:15.525px;color:#fff;font-weight:normal;transform:translateX(-50%);">Receita Total</div>
<div class="t" style="left:177px;top:616px;font-size:12.3px;line-height:14.145px;color:#0c2163;font-weight:normal;">R$</div>
<div class="t" style="left:262px;top:616px;font-size:12.5px;line-height:14.375px;color:#0c2163;font-weight:normal;transform:translateX(-100%);">14,20</div>
<div class="a" style="left:168px;top:651px;width:102px;height:31px;background:#a6a6a6;border:1px solid #808080;border-radius:5px 5px 0 0"></div>
<div class="a" style="left:168px;top:681px;width:102px;height:26px;background:#f2f2f2;border:1px solid #808080;border-top:1px solid #808080"></div>
<div class="t" style="left:219px;top:660px;font-size:13.5px;line-height:15.525px;color:#fff;font-weight:normal;transform:translateX(-50%);">Compra Total</div>
<div class="t" style="left:177px;top:686px;font-size:12.3px;line-height:14.145px;color:#0c2163;font-weight:normal;">R$</div>
<div class="t" style="left:262px;top:686px;font-size:12.5px;line-height:14.375px;color:#0c2163;font-weight:normal;transform:translateX(-100%);">27,66</div>
<div class="a" style="left:280px;top:256px;width:313px;height:32px;background:#a6a6a6;border:1px solid #808080;border-radius:5px 5px 0 0"></div>
<div class="t" style="left:436.5px;top:265px;font-size:13.3px;line-height:15.295px;color:#fff;font-weight:normal;transform:translateX(-50%);">Receita</div>
<div class="a" style="left:592px;top:256px;width:246px;height:32px;background:#a6a6a6;border:1px solid #808080;border-radius:5px 5px 0 0"></div>
<div class="t" style="left:715.0px;top:265px;font-size:13.3px;line-height:15.295px;color:#fff;font-weight:normal;transform:translateX(-50%);">Embalagem de Compra</div>
<div class="a" style="left:841px;top:256px;width:222px;height:32px;background:#a6a6a6;border:1px solid #808080;border-radius:5px 5px 0 0"></div>
<div class="t" style="left:952.0px;top:265px;font-size:13.3px;line-height:15.295px;color:#fff;font-weight:normal;transform:translateX(-50%);">Lista de Compra</div>
<div class="a" style="left:280px;top:288px;width:313px;height:13px;background:#d9d9d9"></div>
<div class="a" style="left:280px;top:300px;width:313px;height:1px;background:#c6c6c6"></div>
<div class="a" style="left:592px;top:288px;width:246px;height:13px;background:#d9d9d9"></div>
<div class="a" style="left:592px;top:300px;width:246px;height:1px;background:#c6c6c6"></div>
<div class="a" style="left:841px;top:288px;width:222px;height:13px;background:#d9d9d9"></div>
<div class="a" style="left:841px;top:300px;width:222px;height:1px;background:#c6c6c6"></div>
<div class="t" style="left:284px;top:288px;font-size:10px;line-height:11.5px;color:#000;font-weight:bold;letter-spacing:0.6px;-webkit-text-stroke:0.3px #000;">Produto</div>
<div class="t" style="left:402px;top:288px;font-size:10px;line-height:11.5px;color:#000;font-weight:bold;letter-spacing:0.6px;transform:translateX(-50%);-webkit-text-stroke:0.3px #000;">Qtd.</div>
<div class="t" style="left:478px;top:288px;font-size:10px;line-height:11.5px;color:#000;font-weight:bold;letter-spacing:0.6px;transform:translateX(-50%);-webkit-text-stroke:0.3px #000;">Unidade</div>
<div class="t" style="left:565px;top:288px;font-size:10px;line-height:11.5px;color:#000;font-weight:bold;letter-spacing:0.6px;transform:translateX(-50%);-webkit-text-stroke:0.3px #000;">un/g/ml</div>
<div class="t" style="left:595px;top:288px;font-size:10px;line-height:11.5px;color:#000;font-weight:bold;letter-spacing:0.6px;-webkit-text-stroke:0.3px #000;">Embalagem</div>
<div class="t" style="left:688px;top:288px;font-size:10px;line-height:11.5px;color:#000;font-weight:bold;letter-spacing:0.6px;transform:translateX(-50%);-webkit-text-stroke:0.3px #000;">un/g/ml</div>
<div class="t" style="left:740px;top:288px;font-size:10px;line-height:11.5px;color:#000;font-weight:bold;letter-spacing:0.6px;transform:translateX(-50%);-webkit-text-stroke:0.3px #000;">Vlr. Un.</div>
<div class="a" style="left:768px;top:286px;width:80px;height:14px;overflow:hidden">
<div class="t" style="left:35.5px;top:2px;font-size:10px;line-height:11.5px;color:#000;font-weight:bold;letter-spacing:0.6px;transform:translateX(-50%);-webkit-text-stroke:0.3px #000;">Custo Receita</div>
</div>
<div class="t" style="left:844px;top:288px;font-size:10px;line-height:11.5px;color:#000;font-weight:bold;letter-spacing:0.6px;-webkit-text-stroke:0.3px #000;">Comprar</div>
<div class="t" style="left:1058px;top:288px;font-size:10px;line-height:11.5px;color:#000;font-weight:bold;letter-spacing:0.6px;transform:translateX(-100%);-webkit-text-stroke:0.3px #000;">Valor Total</div>
<div class="a" style="left:281px;top:301px;width:311px;height:406px;background:#ddebf7"></div>
<div class="a" style="left:537px;top:301px;width:55px;height:406px;background:#f2f2f2"></div>
<div class="a" style="left:593px;top:301px;width:175px;height:406px;background:#ddebf7"></div>
<div class="a" style="left:768px;top:301px;width:69px;height:406px;background:#f2f2f2"></div>
<div class="a" style="left:842px;top:301px;width:220px;height:406px;background:#f2f2f2"></div>
<div class="a" style="left:280px;top:314px;width:312px;height:1px;background:#d0d0d0"></div>
<div class="a" style="left:592px;top:314px;width:245px;height:1px;background:#d0d0d0"></div>
<div class="a" style="left:841px;top:314px;width:221px;height:1px;background:#d0d0d0"></div>
<div class="a" style="left:280px;top:328px;width:312px;height:1px;background:#d0d0d0"></div>
<div class="a" style="left:592px;top:328px;width:245px;height:1px;background:#d0d0d0"></div>
<div class="a" style="left:841px;top:328px;width:221px;height:1px;background:#d0d0d0"></div>
<div class="a" style="left:280px;top:342px;width:312px;height:1px;background:#d0d0d0"></div>
<div class="a" style="left:592px;top:342px;width:245px;height:1px;background:#d0d0d0"></div>
<div class="a" style="left:841px;top:342px;width:221px;height:1px;background:#d0d0d0"></div>
<div class="a" style="left:280px;top:356px;width:312px;height:1px;background:#d0d0d0"></div>
<div class="a" style="left:592px;top:356px;width:245px;height:1px;background:#d0d0d0"></div>
<div class="a" style="left:841px;top:356px;width:221px;height:1px;background:#d0d0d0"></div>
<div class="a" style="left:280px;top:370px;width:312px;height:1px;background:#d0d0d0"></div>
<div class="a" style="left:592px;top:370px;width:245px;height:1px;background:#d0d0d0"></div>
<div class="a" style="left:841px;top:370px;width:221px;height:1px;background:#d0d0d0"></div>
<div class="a" style="left:280px;top:384px;width:312px;height:1px;background:#d0d0d0"></div>
<div class="a" style="left:592px;top:384px;width:245px;height:1px;background:#d0d0d0"></div>
<div class="a" style="left:841px;top:384px;width:221px;height:1px;background:#d0d0d0"></div>
<div class="a" style="left:280px;top:398px;width:312px;height:1px;background:#d0d0d0"></div>
<div class="a" style="left:592px;top:398px;width:245px;height:1px;background:#d0d0d0"></div>
<div class="a" style="left:841px;top:398px;width:221px;height:1px;background:#d0d0d0"></div>
<div class="a" style="left:280px;top:412px;width:312px;height:1px;background:#d0d0d0"></div>
<div class="a" style="left:592px;top:412px;width:245px;height:1px;background:#d0d0d0"></div>
<div class="a" style="left:841px;top:412px;width:221px;height:1px;background:#d0d0d0"></div>
<div class="a" style="left:280px;top:426px;width:312px;height:1px;background:#d0d0d0"></div>
<div class="a" style="left:592px;top:426px;width:245px;height:1px;background:#d0d0d0"></div>
<div class="a" style="left:841px;top:426px;width:221px;height:1px;background:#d0d0d0"></div>
<div class="a" style="left:280px;top:440px;width:312px;height:1px;background:#d0d0d0"></div>
<div class="a" style="left:592px;top:440px;width:245px;height:1px;background:#d0d0d0"></div>
<div class="a" style="left:841px;top:440px;width:221px;height:1px;background:#d0d0d0"></div>
<div class="a" style="left:280px;top:454px;width:312px;height:1px;background:#d0d0d0"></div>
<div class="a" style="left:592px;top:454px;width:245px;height:1px;background:#d0d0d0"></div>
<div class="a" style="left:841px;top:454px;width:221px;height:1px;background:#d0d0d0"></div>
<div class="a" style="left:280px;top:468px;width:312px;height:1px;background:#d0d0d0"></div>
<div class="a" style="left:592px;top:468px;width:245px;height:1px;background:#d0d0d0"></div>
<div class="a" style="left:841px;top:468px;width:221px;height:1px;background:#d0d0d0"></div>
<div class="a" style="left:280px;top:482px;width:312px;height:1px;background:#d0d0d0"></div>
<div class="a" style="left:592px;top:482px;width:245px;height:1px;background:#d0d0d0"></div>
<div class="a" style="left:841px;top:482px;width:221px;height:1px;background:#d0d0d0"></div>
<div class="a" style="left:280px;top:496px;width:312px;height:1px;background:#d0d0d0"></div>
<div class="a" style="left:592px;top:496px;width:245px;height:1px;background:#d0d0d0"></div>
<div class="a" style="left:841px;top:496px;width:221px;height:1px;background:#d0d0d0"></div>
<div class="a" style="left:280px;top:510px;width:312px;height:1px;background:#d0d0d0"></div>
<div class="a" style="left:592px;top:510px;width:245px;height:1px;background:#d0d0d0"></div>
<div class="a" style="left:841px;top:510px;width:221px;height:1px;background:#d0d0d0"></div>
<div class="a" style="left:280px;top:524px;width:312px;height:1px;background:#d0d0d0"></div>
<div class="a" style="left:592px;top:524px;width:245px;height:1px;background:#d0d0d0"></div>
<div class="a" style="left:841px;top:524px;width:221px;height:1px;background:#d0d0d0"></div>
<div class="a" style="left:280px;top:538px;width:312px;height:1px;background:#d0d0d0"></div>
<div class="a" style="left:592px;top:538px;width:245px;height:1px;background:#d0d0d0"></div>
<div class="a" style="left:841px;top:538px;width:221px;height:1px;background:#d0d0d0"></div>
<div class="a" style="left:280px;top:552px;width:312px;height:1px;background:#d0d0d0"></div>
<div class="a" style="left:592px;top:552px;width:245px;height:1px;background:#d0d0d0"></div>
<div class="a" style="left:841px;top:552px;width:221px;height:1px;background:#d0d0d0"></div>
<div class="a" style="left:280px;top:566px;width:312px;height:1px;background:#d0d0d0"></div>
<div class="a" style="left:592px;top:566px;width:245px;height:1px;background:#d0d0d0"></div>
<div class="a" style="left:841px;top:566px;width:221px;height:1px;background:#d0d0d0"></div>
<div class="a" style="left:280px;top:580px;width:312px;height:1px;background:#d0d0d0"></div>
<div class="a" style="left:592px;top:580px;width:245px;height:1px;background:#d0d0d0"></div>
<div class="a" style="left:841px;top:580px;width:221px;height:1px;background:#d0d0d0"></div>
<div class="a" style="left:280px;top:594px;width:312px;height:1px;background:#d0d0d0"></div>
<div class="a" style="left:592px;top:594px;width:245px;height:1px;background:#d0d0d0"></div>
<div class="a" style="left:841px;top:594px;width:221px;height:1px;background:#d0d0d0"></div>
<div class="a" style="left:280px;top:608px;width:312px;height:1px;background:#d0d0d0"></div>
<div class="a" style="left:592px;top:608px;width:245px;height:1px;background:#d0d0d0"></div>
<div class="a" style="left:841px;top:608px;width:221px;height:1px;background:#d0d0d0"></div>
<div class="a" style="left:280px;top:622px;width:312px;height:1px;background:#d0d0d0"></div>
<div class="a" style="left:592px;top:622px;width:245px;height:1px;background:#d0d0d0"></div>
<div class="a" style="left:841px;top:622px;width:221px;height:1px;background:#d0d0d0"></div>
<div class="a" style="left:280px;top:636px;width:312px;height:1px;background:#d0d0d0"></div>
<div class="a" style="left:592px;top:636px;width:245px;height:1px;background:#d0d0d0"></div>
<div class="a" style="left:841px;top:636px;width:221px;height:1px;background:#d0d0d0"></div>
<div class="a" style="left:280px;top:650px;width:312px;height:1px;background:#d0d0d0"></div>
<div class="a" style="left:592px;top:650px;width:245px;height:1px;background:#d0d0d0"></div>
<div class="a" style="left:841px;top:650px;width:221px;height:1px;background:#d0d0d0"></div>
<div class="a" style="left:280px;top:664px;width:312px;height:1px;background:#d0d0d0"></div>
<div class="a" style="left:592px;top:664px;width:245px;height:1px;background:#d0d0d0"></div>
<div class="a" style="left:841px;top:664px;width:221px;height:1px;background:#d0d0d0"></div>
<div class="a" style="left:280px;top:678px;width:312px;height:1px;background:#d0d0d0"></div>
<div class="a" style="left:592px;top:678px;width:245px;height:1px;background:#d0d0d0"></div>
<div class="a" style="left:841px;top:678px;width:221px;height:1px;background:#d0d0d0"></div>
<div class="a" style="left:280px;top:692px;width:312px;height:1px;background:#d0d0d0"></div>
<div class="a" style="left:592px;top:692px;width:245px;height:1px;background:#d0d0d0"></div>
<div class="a" style="left:841px;top:692px;width:221px;height:1px;background:#d0d0d0"></div>
<div class="a" style="left:280px;top:706px;width:312px;height:1px;background:#d0d0d0"></div>
<div class="a" style="left:592px;top:706px;width:245px;height:1px;background:#d0d0d0"></div>
<div class="a" style="left:841px;top:706px;width:221px;height:1px;background:#d0d0d0"></div>
<div class="a" style="left:384px;top:301px;width:1px;height:406px;background:#d0d0d0"></div>
<div class="a" style="left:420px;top:301px;width:1px;height:406px;background:#d0d0d0"></div>
<div class="a" style="left:537px;top:301px;width:1px;height:406px;background:#d0d0d0"></div>
<div class="a" style="left:665px;top:301px;width:1px;height:406px;background:#d0d0d0"></div>
<div class="a" style="left:710px;top:301px;width:1px;height:406px;background:#d0d0d0"></div>
<div class="a" style="left:768px;top:301px;width:1px;height:406px;background:#d0d0d0"></div>
<div class="a" style="left:993px;top:301px;width:1px;height:406px;background:#d0d0d0"></div>
<div class="a" style="left:280px;top:288px;width:1px;height:419px;background:#c0c0c0"></div>
<div class="a" style="left:592px;top:288px;width:1px;height:419px;background:#c0c0c0"></div>
<div class="a" style="left:837px;top:288px;width:1px;height:419px;background:#c0c0c0"></div>
<div class="a" style="left:841px;top:288px;width:1px;height:419px;background:#c0c0c0"></div>
<div class="a" style="left:1062px;top:288px;width:1px;height:419px;background:#c0c0c0"></div>
<div class="t" style="left:284px;top:302px;font-size:10px;line-height:11.5px;color:#727272;font-weight:normal;letter-spacing:0.2px;">Farinha de trigo</div>
<div class="t" style="left:402px;top:302px;font-size:10px;line-height:11.5px;color:#727272;font-weight:normal;letter-spacing:0.2px;transform:translateX(-50%);">3</div>
<div class="a" style="left:421px;top:299px;width:115px;height:15px;overflow:hidden">
<div class="t" style="left:2px;top:3px;font-size:10px;line-height:11.5px;color:#727272;font-weight:normal;letter-spacing:0px;">xícara (Farinha de trigo)</div>
</div>
<div class="t" style="left:565px;top:302px;font-size:10px;line-height:11.5px;color:#727272;font-weight:normal;letter-spacing:0.2px;transform:translateX(-50%);">720</div>
<div class="t" style="left:596px;top:302px;font-size:10px;line-height:11.5px;color:#727272;font-weight:normal;letter-spacing:0.2px;">Pacote</div>
<div class="t" style="left:688px;top:302px;font-size:10px;line-height:11.5px;color:#727272;font-weight:normal;letter-spacing:0.2px;transform:translateX(-50%);">1000</div>
<div class="t" style="left:717px;top:302px;font-size:10px;line-height:11.5px;color:#727272;font-weight:normal;letter-spacing:0.2px;">R$</div>
<div class="t" style="left:763px;top:302px;font-size:10px;line-height:11.5px;color:#727272;font-weight:normal;letter-spacing:0.2px;transform:translateX(-100%);">3,70</div>
<div class="t" style="left:775px;top:302px;font-size:10px;line-height:11.5px;color:#727272;font-weight:normal;letter-spacing:0.2px;">R$</div>
<div class="t" style="left:833px;top:302px;font-size:10px;line-height:11.5px;color:#727272;font-weight:normal;letter-spacing:0.2px;transform:translateX(-100%);">2,66</div>
<div class="t" style="left:845px;top:302px;font-size:10px;line-height:11.5px;color:#727272;font-weight:normal;letter-spacing:0.2px;">1Pacote de Farinha de trigo</div>
<div class="t" style="left:998px;top:302px;font-size:10px;line-height:11.5px;color:#727272;font-weight:normal;letter-spacing:0.2px;">R$</div>
<div class="t" style="left:1057px;top:302px;font-size:10px;line-height:11.5px;color:#727272;font-weight:normal;letter-spacing:0.2px;transform:translateX(-100%);">3,70</div>
<div class="t" style="left:284px;top:316px;font-size:10px;line-height:11.5px;color:#727272;font-weight:normal;letter-spacing:0.2px;">Açucar</div>
<div class="t" style="left:402px;top:316px;font-size:10px;line-height:11.5px;color:#727272;font-weight:normal;letter-spacing:0.2px;transform:translateX(-50%);">2</div>
<div class="a" style="left:421px;top:313px;width:115px;height:15px;overflow:hidden">
<div class="t" style="left:2px;top:3px;font-size:10px;line-height:11.5px;color:#727272;font-weight:normal;letter-spacing:0px;">xícara (Açucar)</div>
</div>
<div class="t" style="left:565px;top:316px;font-size:10px;line-height:11.5px;color:#727272;font-weight:normal;letter-spacing:0.2px;transform:translateX(-50%);">800</div>
<div class="t" style="left:596px;top:316px;font-size:10px;line-height:11.5px;color:#727272;font-weight:normal;letter-spacing:0.2px;">Pacote</div>
<div class="t" style="left:688px;top:316px;font-size:10px;line-height:11.5px;color:#727272;font-weight:normal;letter-spacing:0.2px;transform:translateX(-50%);">1000</div>
<div class="t" style="left:717px;top:316px;font-size:10px;line-height:11.5px;color:#727272;font-weight:normal;letter-spacing:0.2px;">R$</div>
<div class="t" style="left:763px;top:316px;font-size:10px;line-height:11.5px;color:#727272;font-weight:normal;letter-spacing:0.2px;transform:translateX(-100%);">2,52</div>
<div class="t" style="left:775px;top:316px;font-size:10px;line-height:11.5px;color:#727272;font-weight:normal;letter-spacing:0.2px;">R$</div>
<div class="t" style="left:833px;top:316px;font-size:10px;line-height:11.5px;color:#727272;font-weight:normal;letter-spacing:0.2px;transform:translateX(-100%);">2,02</div>
<div class="t" style="left:845px;top:316px;font-size:10px;line-height:11.5px;color:#727272;font-weight:normal;letter-spacing:0.2px;">1Pacote de Açucar</div>
<div class="t" style="left:998px;top:316px;font-size:10px;line-height:11.5px;color:#727272;font-weight:normal;letter-spacing:0.2px;">R$</div>
<div class="t" style="left:1057px;top:316px;font-size:10px;line-height:11.5px;color:#727272;font-weight:normal;letter-spacing:0.2px;transform:translateX(-100%);">2,52</div>
<div class="t" style="left:284px;top:330px;font-size:10px;line-height:11.5px;color:#727272;font-weight:normal;letter-spacing:0.2px;">Ovo</div>
<div class="t" style="left:402px;top:330px;font-size:10px;line-height:11.5px;color:#727272;font-weight:normal;letter-spacing:0.2px;transform:translateX(-50%);">3</div>
<div class="a" style="left:421px;top:327px;width:115px;height:15px;overflow:hidden">
<div class="t" style="left:2px;top:3px;font-size:10px;line-height:11.5px;color:#727272;font-weight:normal;letter-spacing:0px;">Unidade</div>
</div>
<div class="t" style="left:565px;top:330px;font-size:10px;line-height:11.5px;color:#727272;font-weight:normal;letter-spacing:0.2px;transform:translateX(-50%);">6</div>
<div class="t" style="left:596px;top:330px;font-size:10px;line-height:11.5px;color:#727272;font-weight:normal;letter-spacing:0.2px;">Pente</div>
<div class="t" style="left:688px;top:330px;font-size:10px;line-height:11.5px;color:#727272;font-weight:normal;letter-spacing:0.2px;transform:translateX(-50%);">12</div>
<div class="t" style="left:717px;top:330px;font-size:10px;line-height:11.5px;color:#727272;font-weight:normal;letter-spacing:0.2px;">R$</div>
<div class="t" style="left:763px;top:330px;font-size:10px;line-height:11.5px;color:#727272;font-weight:normal;letter-spacing:0.2px;transform:translateX(-100%);">8,00</div>
<div class="t" style="left:775px;top:330px;font-size:10px;line-height:11.5px;color:#727272;font-weight:normal;letter-spacing:0.2px;">R$</div>
<div class="t" style="left:833px;top:330px;font-size:10px;line-height:11.5px;color:#727272;font-weight:normal;letter-spacing:0.2px;transform:translateX(-100%);">4,00</div>
<div class="t" style="left:845px;top:330px;font-size:10px;line-height:11.5px;color:#727272;font-weight:normal;letter-spacing:0.2px;">1Pente de Ovo</div>
<div class="t" style="left:998px;top:330px;font-size:10px;line-height:11.5px;color:#727272;font-weight:normal;letter-spacing:0.2px;">R$</div>
<div class="t" style="left:1057px;top:330px;font-size:10px;line-height:11.5px;color:#727272;font-weight:normal;letter-spacing:0.2px;transform:translateX(-100%);">8,00</div>
<div class="t" style="left:284px;top:344px;font-size:10px;line-height:11.5px;color:#727272;font-weight:normal;letter-spacing:0.2px;">Leite</div>
<div class="t" style="left:402px;top:344px;font-size:10px;line-height:11.5px;color:#727272;font-weight:normal;letter-spacing:0.2px;transform:translateX(-50%);">200</div>
<div class="a" style="left:421px;top:341px;width:115px;height:15px;overflow:hidden">
<div class="t" style="left:2px;top:3px;font-size:10px;line-height:11.5px;color:#727272;font-weight:normal;letter-spacing:0px;">Mililitro</div>
</div>
<div class="t" style="left:565px;top:344px;font-size:10px;line-height:11.5px;color:#727272;font-weight:normal;letter-spacing:0.2px;transform:translateX(-50%);">400</div>
<div class="t" style="left:596px;top:344px;font-size:10px;line-height:11.5px;color:#727272;font-weight:normal;letter-spacing:0.2px;">Caixa</div>
<div class="t" style="left:688px;top:344px;font-size:10px;line-height:11.5px;color:#727272;font-weight:normal;letter-spacing:0.2px;transform:translateX(-50%);">1000</div>
<div class="t" style="left:717px;top:344px;font-size:10px;line-height:11.5px;color:#727272;font-weight:normal;letter-spacing:0.2px;">R$</div>
<div class="t" style="left:763px;top:344px;font-size:10px;line-height:11.5px;color:#727272;font-weight:normal;letter-spacing:0.2px;transform:translateX(-100%);">2,98</div>
<div class="t" style="left:775px;top:344px;font-size:10px;line-height:11.5px;color:#727272;font-weight:normal;letter-spacing:0.2px;">R$</div>
<div class="t" style="left:833px;top:344px;font-size:10px;line-height:11.5px;color:#727272;font-weight:normal;letter-spacing:0.2px;transform:translateX(-100%);">1,19</div>
<div class="t" style="left:845px;top:344px;font-size:10px;line-height:11.5px;color:#727272;font-weight:normal;letter-spacing:0.2px;">1Caixa de Leite</div>
<div class="t" style="left:998px;top:344px;font-size:10px;line-height:11.5px;color:#727272;font-weight:normal;letter-spacing:0.2px;">R$</div>
<div class="t" style="left:1057px;top:344px;font-size:10px;line-height:11.5px;color:#727272;font-weight:normal;letter-spacing:0.2px;transform:translateX(-100%);">2,98</div>
<div class="t" style="left:284px;top:358px;font-size:10px;line-height:11.5px;color:#727272;font-weight:normal;letter-spacing:0.2px;">Manteiga</div>
<div class="t" style="left:402px;top:358px;font-size:10px;line-height:11.5px;color:#727272;font-weight:normal;letter-spacing:0.2px;transform:translateX(-50%);">4</div>
<div class="a" style="left:421px;top:355px;width:115px;height:15px;overflow:hidden">
<div class="t" style="left:2px;top:3px;font-size:10px;line-height:11.5px;color:#727272;font-weight:normal;letter-spacing:0px;">colher de sopa (Manteiga)</div>
</div>
<div class="t" style="left:565px;top:358px;font-size:10px;line-height:11.5px;color:#727272;font-weight:normal;letter-spacing:0.2px;transform:translateX(-50%);">96</div>
<div class="t" style="left:596px;top:358px;font-size:10px;line-height:11.5px;color:#727272;font-weight:normal;letter-spacing:0.2px;">Pote</div>
<div class="t" style="left:688px;top:358px;font-size:10px;line-height:11.5px;color:#727272;font-weight:normal;letter-spacing:0.2px;transform:translateX(-50%);">200</div>
<div class="t" style="left:717px;top:358px;font-size:10px;line-height:11.5px;color:#727272;font-weight:normal;letter-spacing:0.2px;">R$</div>
<div class="t" style="left:763px;top:358px;font-size:10px;line-height:11.5px;color:#727272;font-weight:normal;letter-spacing:0.2px;transform:translateX(-100%);">7,99</div>
<div class="t" style="left:775px;top:358px;font-size:10px;line-height:11.5px;color:#727272;font-weight:normal;letter-spacing:0.2px;">R$</div>
<div class="t" style="left:833px;top:358px;font-size:10px;line-height:11.5px;color:#727272;font-weight:normal;letter-spacing:0.2px;transform:translateX(-100%);">3,84</div>
<div class="t" style="left:845px;top:358px;font-size:10px;line-height:11.5px;color:#727272;font-weight:normal;letter-spacing:0.2px;">1Pote de Manteiga</div>
<div class="t" style="left:998px;top:358px;font-size:10px;line-height:11.5px;color:#727272;font-weight:normal;letter-spacing:0.2px;">R$</div>
<div class="t" style="left:1057px;top:358px;font-size:10px;line-height:11.5px;color:#727272;font-weight:normal;letter-spacing:0.2px;transform:translateX(-100%);">7,99</div>
<div class="t" style="left:284px;top:372px;font-size:10px;line-height:11.5px;color:#727272;font-weight:normal;letter-spacing:0.2px;">Fermento</div>
<div class="t" style="left:402px;top:372px;font-size:10px;line-height:11.5px;color:#727272;font-weight:normal;letter-spacing:0.2px;transform:translateX(-50%);">1</div>
<div class="a" style="left:421px;top:369px;width:115px;height:15px;overflow:hidden">
<div class="t" style="left:2px;top:3px;font-size:10px;line-height:11.5px;color:#727272;font-weight:normal;letter-spacing:0px;">colher de chá (Fermento)</div>
</div>
<div class="t" style="left:565px;top:372px;font-size:10px;line-height:11.5px;color:#727272;font-weight:normal;letter-spacing:0.2px;transform:translateX(-50%);">20</div>
<div class="t" style="left:596px;top:372px;font-size:10px;line-height:11.5px;color:#727272;font-weight:normal;letter-spacing:0.2px;">Pote</div>
<div class="t" style="left:688px;top:372px;font-size:10px;line-height:11.5px;color:#727272;font-weight:normal;letter-spacing:0.2px;transform:translateX(-50%);">100</div>
<div class="t" style="left:717px;top:372px;font-size:10px;line-height:11.5px;color:#727272;font-weight:normal;letter-spacing:0.2px;">R$</div>
<div class="t" style="left:763px;top:372px;font-size:10px;line-height:11.5px;color:#727272;font-weight:normal;letter-spacing:0.2px;transform:translateX(-100%);">2,47</div>
<div class="t" style="left:775px;top:372px;font-size:10px;line-height:11.5px;color:#727272;font-weight:normal;letter-spacing:0.2px;">R$</div>
<div class="t" style="left:833px;top:372px;font-size:10px;line-height:11.5px;color:#727272;font-weight:normal;letter-spacing:0.2px;transform:translateX(-100%);">0,49</div>
<div class="t" style="left:845px;top:372px;font-size:10px;line-height:11.5px;color:#727272;font-weight:normal;letter-spacing:0.2px;">1Pote de Fermento</div>
<div class="t" style="left:998px;top:372px;font-size:10px;line-height:11.5px;color:#727272;font-weight:normal;letter-spacing:0.2px;">R$</div>
<div class="t" style="left:1057px;top:372px;font-size:10px;line-height:11.5px;color:#727272;font-weight:normal;letter-spacing:0.2px;transform:translateX(-100%);">2,47</div>
<div class="t" style="left:775px;top:386px;font-size:10px;line-height:11.5px;color:#727272;font-weight:normal;letter-spacing:0.2px;">R$</div>
<div class="t" style="left:818px;top:386px;font-size:10px;line-height:11.5px;color:#727272;font-weight:normal;letter-spacing:0.2px;transform:translateX(-50%);">-</div>
<div class="t" style="left:775px;top:400px;font-size:10px;line-height:11.5px;color:#727272;font-weight:normal;letter-spacing:0.2px;">R$</div>
<div class="t" style="left:818px;top:400px;font-size:10px;line-height:11.5px;color:#727272;font-weight:normal;letter-spacing:0.2px;transform:translateX(-50%);">-</div>
<div class="t" style="left:775px;top:414px;font-size:10px;line-height:11.5px;color:#727272;font-weight:normal;letter-spacing:0.2px;">R$</div>
<div class="t" style="left:818px;top:414px;font-size:10px;line-height:11.5px;color:#727272;font-weight:normal;letter-spacing:0.2px;transform:translateX(-50%);">-</div>
<div class="t" style="left:775px;top:428px;font-size:10px;line-height:11.5px;color:#727272;font-weight:normal;letter-spacing:0.2px;">R$</div>
<div class="t" style="left:818px;top:428px;font-size:10px;line-height:11.5px;color:#727272;font-weight:normal;letter-spacing:0.2px;transform:translateX(-50%);">-</div>
<div class="t" style="left:775px;top:442px;font-size:10px;line-height:11.5px;color:#727272;font-weight:normal;letter-spacing:0.2px;">R$</div>
<div class="t" style="left:818px;top:442px;font-size:10px;line-height:11.5px;color:#727272;font-weight:normal;letter-spacing:0.2px;transform:translateX(-50%);">-</div>
<div class="t" style="left:775px;top:456px;font-size:10px;line-height:11.5px;color:#727272;font-weight:normal;letter-spacing:0.2px;">R$</div>
<div class="t" style="left:818px;top:456px;font-size:10px;line-height:11.5px;color:#727272;font-weight:normal;letter-spacing:0.2px;transform:translateX(-50%);">-</div>
<div class="t" style="left:775px;top:470px;font-size:10px;line-height:11.5px;color:#727272;font-weight:normal;letter-spacing:0.2px;">R$</div>
<div class="t" style="left:818px;top:470px;font-size:10px;line-height:11.5px;color:#727272;font-weight:normal;letter-spacing:0.2px;transform:translateX(-50%);">-</div>
<div class="t" style="left:775px;top:484px;font-size:10px;line-height:11.5px;color:#727272;font-weight:normal;letter-spacing:0.2px;">R$</div>
<div class="t" style="left:818px;top:484px;font-size:10px;line-height:11.5px;color:#727272;font-weight:normal;letter-spacing:0.2px;transform:translateX(-50%);">-</div>
<div class="t" style="left:775px;top:498px;font-size:10px;line-height:11.5px;color:#727272;font-weight:normal;letter-spacing:0.2px;">R$</div>
<div class="t" style="left:818px;top:498px;font-size:10px;line-height:11.5px;color:#727272;font-weight:normal;letter-spacing:0.2px;transform:translateX(-50%);">-</div>
<div class="t" style="left:775px;top:512px;font-size:10px;line-height:11.5px;color:#727272;font-weight:normal;letter-spacing:0.2px;">R$</div>
<div class="t" style="left:818px;top:512px;font-size:10px;line-height:11.5px;color:#727272;font-weight:normal;letter-spacing:0.2px;transform:translateX(-50%);">-</div>
<div class="t" style="left:775px;top:526px;font-size:10px;line-height:11.5px;color:#727272;font-weight:normal;letter-spacing:0.2px;">R$</div>
<div class="t" style="left:818px;top:526px;font-size:10px;line-height:11.5px;color:#727272;font-weight:normal;letter-spacing:0.2px;transform:translateX(-50%);">-</div>
<div class="t" style="left:775px;top:540px;font-size:10px;line-height:11.5px;color:#727272;font-weight:normal;letter-spacing:0.2px;">R$</div>
<div class="t" style="left:818px;top:540px;font-size:10px;line-height:11.5px;color:#727272;font-weight:normal;letter-spacing:0.2px;transform:translateX(-50%);">-</div>
<div class="t" style="left:775px;top:554px;font-size:10px;line-height:11.5px;color:#727272;font-weight:normal;letter-spacing:0.2px;">R$</div>
<div class="t" style="left:818px;top:554px;font-size:10px;line-height:11.5px;color:#727272;font-weight:normal;letter-spacing:0.2px;transform:translateX(-50%);">-</div>
<div class="t" style="left:775px;top:568px;font-size:10px;line-height:11.5px;color:#727272;font-weight:normal;letter-spacing:0.2px;">R$</div>
<div class="t" style="left:818px;top:568px;font-size:10px;line-height:11.5px;color:#727272;font-weight:normal;letter-spacing:0.2px;transform:translateX(-50%);">-</div>
<div class="t" style="left:775px;top:582px;font-size:10px;line-height:11.5px;color:#727272;font-weight:normal;letter-spacing:0.2px;">R$</div>
<div class="t" style="left:818px;top:582px;font-size:10px;line-height:11.5px;color:#727272;font-weight:normal;letter-spacing:0.2px;transform:translateX(-50%);">-</div>
<div class="t" style="left:775px;top:596px;font-size:10px;line-height:11.5px;color:#727272;font-weight:normal;letter-spacing:0.2px;">R$</div>
<div class="t" style="left:818px;top:596px;font-size:10px;line-height:11.5px;color:#727272;font-weight:normal;letter-spacing:0.2px;transform:translateX(-50%);">-</div>
<div class="t" style="left:775px;top:610px;font-size:10px;line-height:11.5px;color:#727272;font-weight:normal;letter-spacing:0.2px;">R$</div>
<div class="t" style="left:818px;top:610px;font-size:10px;line-height:11.5px;color:#727272;font-weight:normal;letter-spacing:0.2px;transform:translateX(-50%);">-</div>
<div class="t" style="left:775px;top:624px;font-size:10px;line-height:11.5px;color:#727272;font-weight:normal;letter-spacing:0.2px;">R$</div>
<div class="t" style="left:818px;top:624px;font-size:10px;line-height:11.5px;color:#727272;font-weight:normal;letter-spacing:0.2px;transform:translateX(-50%);">-</div>
<div class="t" style="left:775px;top:638px;font-size:10px;line-height:11.5px;color:#727272;font-weight:normal;letter-spacing:0.2px;">R$</div>
<div class="t" style="left:818px;top:638px;font-size:10px;line-height:11.5px;color:#727272;font-weight:normal;letter-spacing:0.2px;transform:translateX(-50%);">-</div>
<div class="t" style="left:775px;top:652px;font-size:10px;line-height:11.5px;color:#727272;font-weight:normal;letter-spacing:0.2px;">R$</div>
<div class="t" style="left:818px;top:652px;font-size:10px;line-height:11.5px;color:#727272;font-weight:normal;letter-spacing:0.2px;transform:translateX(-50%);">-</div>
<div class="t" style="left:775px;top:666px;font-size:10px;line-height:11.5px;color:#727272;font-weight:normal;letter-spacing:0.2px;">R$</div>
<div class="t" style="left:818px;top:666px;font-size:10px;line-height:11.5px;color:#727272;font-weight:normal;letter-spacing:0.2px;transform:translateX(-50%);">-</div>
<div class="t" style="left:775px;top:680px;font-size:10px;line-height:11.5px;color:#727272;font-weight:normal;letter-spacing:0.2px;">R$</div>
<div class="t" style="left:818px;top:680px;font-size:10px;line-height:11.5px;color:#727272;font-weight:normal;letter-spacing:0.2px;transform:translateX(-50%);">-</div>
<div class="t" style="left:775px;top:694px;font-size:10px;line-height:11.5px;color:#727272;font-weight:normal;letter-spacing:0.2px;">R$</div>
<div class="t" style="left:818px;top:694px;font-size:10px;line-height:11.5px;color:#727272;font-weight:normal;letter-spacing:0.2px;transform:translateX(-50%);">-</div>
<div class="a" style="left:592px;top:706px;width:246px;height:15px;background:#d9d9d9;border:1px solid #a6a6a6"></div>
<div class="a" style="left:841px;top:706px;width:222px;height:15px;background:#d9d9d9;border:1px solid #a6a6a6"></div>
<div class="t" style="left:775px;top:708px;font-size:10px;line-height:11.5px;color:#000;font-weight:normal;">R$</div>
<div class="t" style="left:833px;top:708px;font-size:10px;line-height:11.5px;color:#000;font-weight:normal;transform:translateX(-100%);">14,20</div>
<div class="t" style="left:998px;top:708px;font-size:10px;line-height:11.5px;color:#000;font-weight:normal;">R$</div>
<div class="t" style="left:1057px;top:708px;font-size:10px;line-height:11.5px;color:#000;font-weight:normal;transform:translateX(-100%);">27,66</div>
<div class="a" style="left:664px;top:481px;width:48px;height:17px;border:2px solid #217346"></div>
<div class="a" style="left:666px;top:483px;width:44px;height:13px;border:1px solid #fff"></div>
<div class="a" style="left:706px;top:493px;width:7px;height:6px;background:#fff"></div>
<div class="a" style="left:708px;top:494px;width:5px;height:5px;background:#217346"></div>
<div class="a" style="left:0px;top:989px;width:1065px;height:1px;background:#c6c6c6"></div>
<div class="a" style="left:0px;top:990px;width:1065px;height:28px;background:#e6e6e6"></div>
<div class="a" style="left:0px;top:1017px;width:1065px;height:1px;background:#c6c6c6"></div>
<svg class="a" style="left:24px;top:999px;" width="6" height="10" viewBox="0 0 6 10"><path d="M6 0v10L0 5z" fill="#c6c6c6"/></svg>
<svg class="a" style="left:52px;top:999px;" width="6" height="10" viewBox="0 0 6 10"><path d="M0 0v10l6-5z" fill="#c6c6c6"/></svg>
<div class="a" style="left:99px;top:997px;width:1px;height:18px;background:#9a9a9a"></div>
<div class="a" style="left:162px;top:997px;width:1px;height:18px;background:#9a9a9a"></div>
<div class="t" style="left:111px;top:997px;font-size:13px;line-height:14.95px;color:#444;font-weight:normal;">HOME</div>
<div class="t" style="left:176px;top:997px;font-size:12.5px;line-height:14.375px;color:#444;font-weight:normal;">UNIDADE</div>
<div class="a" style="left:245px;top:989px;width:75px;height:25px;background:#fff;border-left:1px solid #c6c6c6;border-right:1px solid #c6c6c6"></div>
<div class="a" style="left:246px;top:1012px;width:73px;height:2px;background:#217346"></div>
<div class="t" style="left:282.5px;top:998px;font-size:12px;line-height:13.8px;color:#217346;font-weight:bold;transform:translateX(-50%);">RECEITA</div>
<svg class="a" style="left:352px;top:995px;" width="17" height="17" viewBox="0 0 17 17"><circle cx="8.5" cy="8.5" r="7.5" fill="none" stroke="#777" stroke-width="1.2"/><path d="M8.5 4.5v8M4.5 8.5h8" stroke="#777" stroke-width="1.4"/></svg>
<div class="a" style="left:603px;top:998px;width:2px;height:2px;background:#a0a0a0"></div>
<div class="a" style="left:603px;top:1003px;width:2px;height:2px;background:#a0a0a0"></div>
<div class="a" style="left:603px;top:1008px;width:2px;height:2px;background:#a0a0a0"></div>
<div class="a" style="left:620px;top:997px;width:460px;height:15px;background:#fff;border:1px solid #b4b4b4"></div>
<div class="a" style="left:634px;top:997px;width:1px;height:15px;background:#b4b4b4"></div>
<svg class="a" style="left:624px;top:1001px;" width="5" height="8" viewBox="0 0 5 8"><path d="M5 0v8L0 4z" fill="#222"/></svg>
<div class="a" style="left:0px;top:1018px;width:1065px;height:19px;background:#f3f3f3"></div>
<svg class="a" style="left:7px;top:1021px;" width="14" height="14" viewBox="0 0 14 14"><circle cx="3.5" cy="3.5" r="3" fill="#555"/><path d="M7 1.5h6v2H7z" fill="#555"/><rect x="1.5" y="5.5" width="11.5" height="8" fill="none" stroke="#555"/><path d="M3.5 8h2M7 8h2M10.5 8h1.5M3.5 10.5h2M7 10.5h2M10.5 10.5h1.5" stroke="#555"/></svg>
</body></html>
